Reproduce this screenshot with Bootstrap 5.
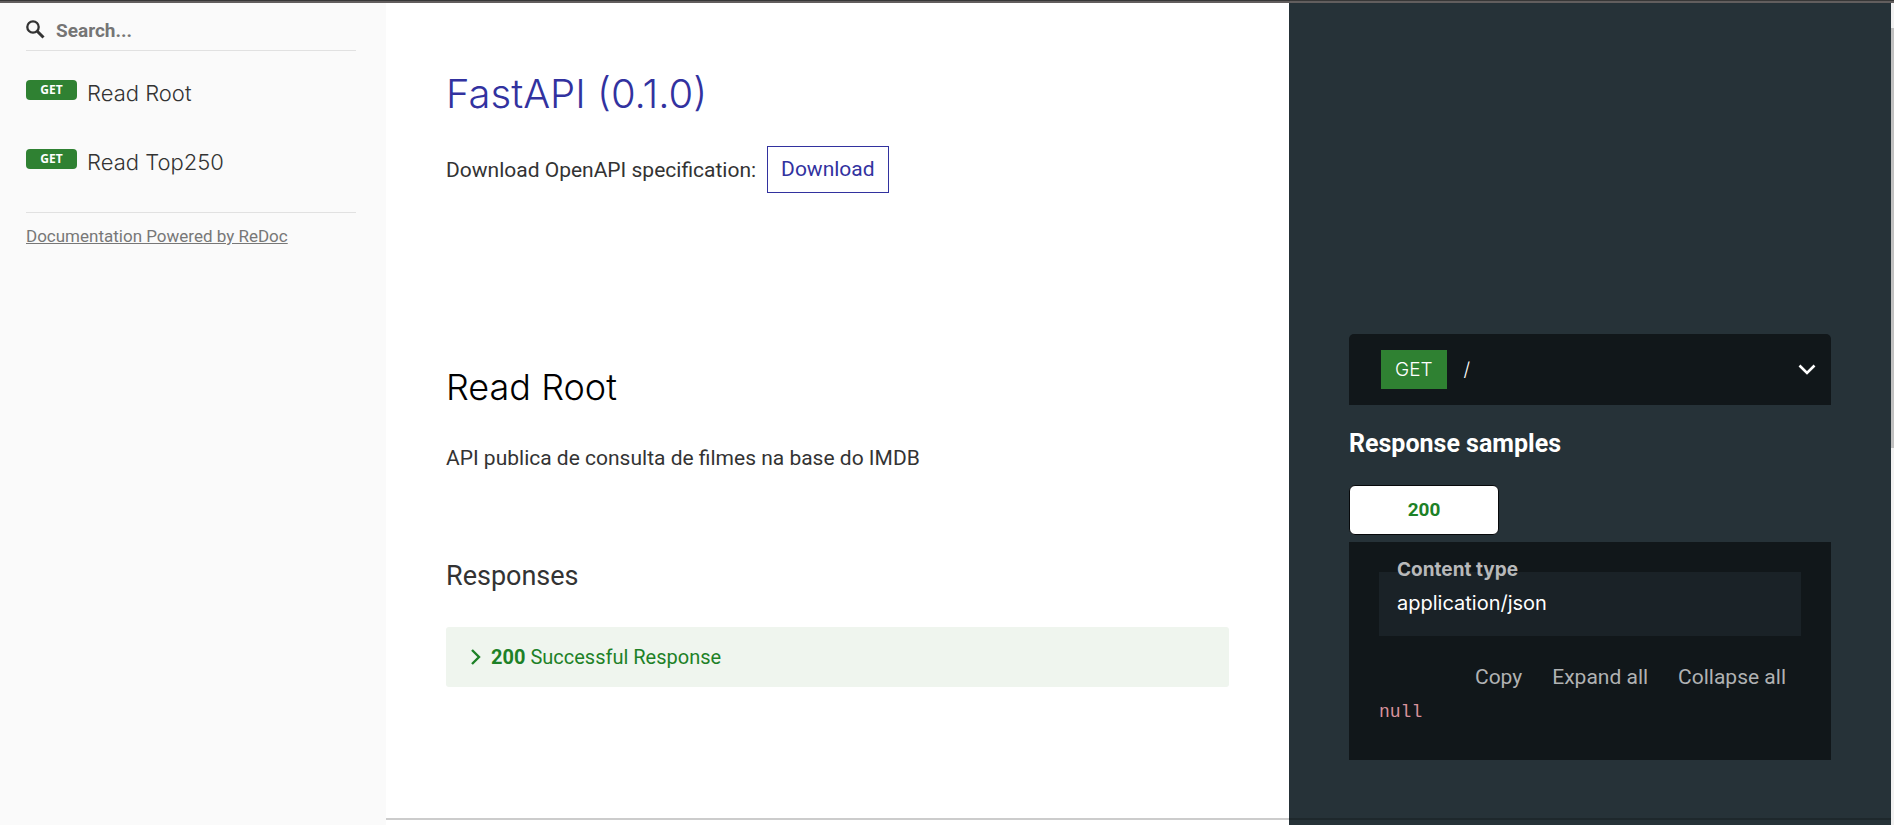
<!DOCTYPE html>
<html lang="en">
<head>
<meta charset="utf-8">
<meta name="viewport" content="width=device-width, initial-scale=1">
<title>FastAPI - ReDoc</title>
<link href="https://cdn.jsdelivr.net/npm/bootstrap@5.3.0/dist/css/bootstrap.min.css" rel="stylesheet">
<style>
  body { font-family: Roboto, sans-serif; font-size: 21px; line-height: 30px; color: #333; }
  .display-font { font-family: Inter, sans-serif; font-weight: 300; }
  .window-edge { height: 3px; background: #625e5e; border-top: 1px solid #373737; }
  .side-menu { width: 386px; background: #fafafa; padding: 12px 30px 0 26px; }
  .search-row { height: 36px; gap: 11px; border-bottom: 1px solid #e1e1e1; }
  .search-row input { font-size: 19px; line-height: 24px; font-weight: 700; color: #333; outline: 0; }
  .search-row input::placeholder { color: #757575; opacity: 1; }
  .menu-list { padding: 18px 0 5px; border-bottom: 1px solid #e1e1e1; }
  .menu-entry { height: 69px; padding-top: 11px; gap: 10px; color: #333; font-size: 22px; line-height: 26px; }
  .verb { width: 51px; height: 20px; border-radius: 4px; background: #2f8132; color: #fff; font: 700 12px/20px "Noto Sans", sans-serif; text-align: center; }
  .powered { margin-top: 11px; font-size: 17px; line-height: 24px; color: #777; }
  .api-content { background: linear-gradient(to right, #fff 60%, #263238 60%); }
  .doc-col { width: 60%; padding: 0 60px; }
  .sample-col { width: 40%; padding: 0 60px; }
  .intro { padding-top: 67px; padding-bottom: 141px; }
  h1 { font-size: 40px; line-height: 48px; color: #32329f; margin: 0 0 28px; }
  .download { padding: 8px 13px; margin-left: 11px; border: 1px solid #32329f; color: #32329f; line-height: 29px; }
  .operation { padding-bottom: 58px; border-bottom: 2px solid rgba(0,0,0,.2); }
  h2 { font-size: 36px; line-height: 44px; color: #000; margin: 31px 0 34px; }
  .operation h3 { font-size: 27px; line-height: 36px; font-weight: 400; margin: 85px 0 33px; }
  .response { height: 60px; padding: 0 25px; border: 0; border-radius: 3px; background: #eff5ee; color: #1d8127; font-size: 20px; text-align: left; gap: 10px; }
  .endpoint { height: 71px; padding: 0 15px 0 32px; border: 0; border-radius: 5px 5px 0 0; background: #11171a; color: #fff; font-size: 19px; }
  .endpoint .http-verb { background: #2f8132; padding: 0 14px; line-height: 39px; margin-right: 17px; }
  .operation .sample-title { font-size: 25px; line-height: 34px; font-weight: 700; color: #fff; margin: 22px 0 24px; }
  .code-tab { width: 150px; height: 50px; border: 1px solid #07090b; border-radius: 6px; background: #fff; color: #1d8127; font-weight: 700; font-size: 19px; margin-bottom: 7px; }
  .sample { background: #11171a; padding: 30px 30px 26px; height: 218px; }
  .mime { display: flow-root; background: #1a2227; height: 64px; padding: 0 18px; }
  .mime dt { font-size: 19px; line-height: 24px; margin-top: -14px; color: #b8b9ba; font-weight: 700; }
  .mime dd { font-size: 20px; line-height: 24px; margin: 9px 0 0; color: #fff; font-weight: 400; }
  .tools { margin-top: 26px; gap: 30px; padding-right: 15px; }
  .tools button { border: 0; padding: 0; background: none; color: #b0b2b3; font-size: 21px; line-height: 30px; }
  pre { font: 18px/24px "Liberation Mono", monospace; color: #d8929c; margin: 8px 0 0; }
  .scroll-strip { width: 3px; background: #f1f1f1; padding-top: 25px; }
  .scroll-thumb { height: 420px; background: #c1c1c1; }
</style>
</head>
<body class="d-flex flex-column min-vh-100">
<div class="window-edge"></div>
<div class="d-flex flex-grow-1">
  <nav class="side-menu flex-shrink-0">
    <label class="search-row d-flex align-items-start">
      <svg class="flex-shrink-0" width="19" height="30" viewBox="0 0 19 30" fill="none" stroke="#333" aria-hidden="true"><circle cx="7" cy="12" r="5.7" stroke-width="2.3"/><path d="M11 16l6.5 6.5" stroke-width="3"/></svg>
      <input class="border-0 p-0 bg-transparent flex-grow-1 mt-1" type="text" placeholder="Search..." aria-label="Search">
    </label>
    <div class="menu-list">
      <a class="menu-entry d-flex text-decoration-none" href="#read-root"><span class="verb">GET</span><span class="display-font">Read Root</span></a>
      <a class="menu-entry d-flex text-decoration-none" href="#read-top250"><span class="verb">GET</span><span class="display-font">Read Top250</span></a>
    </div>
    <a class="powered d-block" href="#redoc">Documentation Powered by ReDoc</a>
  </nav>
  <main class="api-content flex-grow-1">
    <section class="intro doc-col">
      <h1 class="display-font">FastAPI (0.1.0)</h1>
      <div class="d-flex align-items-center">Download OpenAPI specification:<a class="download text-decoration-none" href="#openapi">Download</a></div>
    </section>
    <section class="operation d-flex" id="read-root">
      <div class="doc-col">
        <h2 class="display-font">Read Root</h2>
        <p class="m-0">API publica de consulta de filmes na base do IMDB</p>
        <h3>Responses</h3>
        <button class="response d-flex align-items-center w-100" type="button">
          <svg width="10" height="16" viewBox="0 0 10 16" fill="none" stroke="#1d8127" stroke-width="2.4" aria-hidden="true"><path d="M1 1l7 7-7 7"/></svg>
          <span><strong>200</strong> Successful Response</span>
        </button>
      </div>
      <div class="sample-col">
        <button class="endpoint display-font d-flex align-items-center w-100" type="button">
          <span class="http-verb">GET</span><span>/</span>
          <svg class="ms-auto" width="18" height="12" viewBox="0 0 18 12" fill="none" stroke="#fff" stroke-width="2.6" aria-hidden="true"><path d="M1.5 1.5L9 9l7.500-7.500"/></svg>
        </button>
        <h3 class="sample-title">Response samples</h3>
        <button class="code-tab d-block" type="button">200</button>
        <div class="sample">
          <dl class="mime display-font mb-0">
            <dt>Content type</dt>
            <dd>application/json</dd>
          </dl>
          <div class="tools d-flex justify-content-end">
            <button type="button">Copy</button><button type="button">Expand all</button><button type="button">Collapse all</button>
          </div>
          <pre>null</pre>
        </div>
      </div>
    </section>
  </main>
  <div class="scroll-strip"><div class="scroll-thumb"></div></div>
</div>
<script src="https://cdn.jsdelivr.net/npm/bootstrap@5.3.0/dist/js/bootstrap.bundle.min.js"></script>
</body>
</html>
